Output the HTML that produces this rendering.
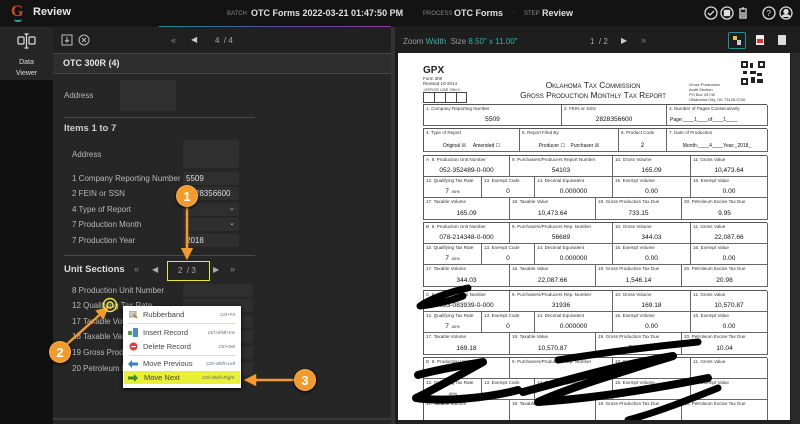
<!DOCTYPE html>
<html><head><meta charset="utf-8"><style>
*{margin:0;padding:0;box-sizing:border-box}
body{width:800px;height:424px;overflow:hidden;background:#1b1b1b;font-family:"Liberation Sans",sans-serif;position:relative}
.a{position:absolute}
.t{position:absolute;white-space:nowrap}
.lbl{color:#b8b8b8;font-size:8px}
.inp{position:absolute;background:#2f2f2f;border-radius:2px}
.c{position:absolute;border-right:1px solid #666;border-bottom:1px solid #666}
.c .l{position:absolute;left:2px;top:1px;font-size:4.6px;color:#333;white-space:nowrap}
.c .v{position:absolute;left:0;right:0;bottom:2px;text-align:center;font-size:6.6px;color:#111}
.blk{position:absolute;left:423px;width:344px;height:65px;border:1px solid #555;border-right:none;border-bottom:none}
.mi{position:absolute;left:0;width:118px;height:13px;font-size:7.5px;color:#444}
.mi span{position:absolute;left:20px;top:2px}
.mi i{position:absolute;right:6px;top:4px;font-size:4.5px;color:#567;font-style:italic}
.num{position:absolute;width:22px;height:22px;border-radius:50%;background:#f39a2b;border:1.5px solid #fff3;color:#fff;font-weight:bold;font-size:13px;text-align:center;line-height:21px;box-shadow:0 1px 3px #000}
</style></head><body>
<!-- top bar -->
<div class="a" style="left:0;top:0;width:800px;height:26px;background:#131313"></div>
<div class="t" style="left:11px;top:3px;font-family:'Liberation Serif',serif;font-size:16px;color:#d2462a;font-weight:bold">G</div>
<div class="a" style="left:14px;top:19px;width:8px;height:3px;border-bottom:2px solid #2aa39a;border-radius:0 0 4px 4px"></div>
<div class="t" style="left:33px;top:6px;font-size:11px;font-weight:bold;color:#e8e8e8">Review</div>
<div class="t" style="left:227px;top:11px;font-size:6px;color:#888">BATCH</div>
<div class="t" style="left:251px;top:8px;font-size:9px;font-weight:bold;color:#e0e0e0">OTC Forms 2022-03-21 01:47:50 PM</div>
<div class="t" style="left:412px;top:9px;font-size:7px;color:#777">·</div>
<div class="t" style="left:423px;top:11px;font-size:6px;color:#888">PROCESS</div>
<div class="t" style="left:454px;top:8px;font-size:9px;font-weight:bold;color:#e0e0e0">OTC Forms</div>
<div class="t" style="left:512px;top:9px;font-size:7px;color:#777">·</div>
<div class="t" style="left:524px;top:11px;font-size:6px;color:#888">STEP</div>
<div class="t" style="left:542px;top:8px;font-size:9px;font-weight:bold;color:#e0e0e0">Review</div>
<svg class="a" style="left:703px;top:5px" width="95" height="16" fill="none" stroke="#ddd" stroke-width="1.3">
<circle cx="8" cy="8" r="6"/><path d="M5 8l2 2 4-4"/>
<circle cx="24" cy="8" r="6"/><rect x="21.5" y="5.5" width="5" height="5" fill="#ddd"/>
<path d="M36 4h8M39 3h2M37 5v8h6V5M39 7v5M41 7v5"/>
<circle cx="66" cy="8" r="6"/><text x="63.5" y="11" font-size="8" fill="#ddd" stroke="none" font-family="Liberation Sans">?</text>
<circle cx="83" cy="8" r="6"/><circle cx="83" cy="6.5" r="2" fill="#ddd"/><path d="M79 12c1-3 7-3 8 0" fill="#ddd"/>
</svg>
<div class="a" style="left:159px;top:26px;width:232px;height:1px;background:linear-gradient(90deg,#1b8f8a,#5a4aa0,#8a3aa0)"></div>
<!-- sidebar -->
<div class="a" style="left:0;top:27px;width:53px;height:397px;background:#101010"></div>
<div class="a" style="left:0;top:27px;width:53px;height:53px;background:#262626"></div>
<svg class="a" style="left:17px;top:33px" width="20" height="16" fill="none" stroke="#ddd" stroke-width="1.2"><rect x="1" y="4" width="6" height="7" rx="1"/><rect x="12" y="4" width="6" height="7" rx="1"/><path d="M9.5 1v14M7.5 1h4M7.5 15h4"/></svg>
<div class="t" style="left:0;width:53px;text-align:center;top:57px;font-size:7px;color:#ddd;line-height:11px">Data<br>Viewer</div>
<!-- left panel -->
<div class="a" style="left:53px;top:27px;width:338px;height:397px;background:#262626"></div>
<div class="a" style="left:53px;top:27px;width:338px;height:26px;background:#202020"></div>
<svg class="a" style="left:61px;top:34px" width="30" height="12" fill="none" stroke="#bbb" stroke-width="1"><rect x="1" y="1" width="10" height="10"/><path d="M6 3v5M4 6l2 2 2-2"/><circle cx="23" cy="6" r="5"/><path d="M21 4l4 4M25 4l-4 4"/></svg>
<div class="t" style="left:171px;top:35px;font-size:9px;color:#888">«</div>
<div class="t" style="left:191px;top:35px;font-size:8px;color:#ccc">◀</div>
<div class="t" style="left:215px;top:36px;font-size:8px;color:#aaa">4 &nbsp;/ 4</div>
<div class="a" style="left:53px;top:53px;width:338px;height:21px;background:#2e2e2e;border-top:1px solid #444;border-bottom:1px solid #444"></div>
<div class="t" style="left:63px;top:58px;font-size:9px;font-weight:bold;color:#e6e6e6">OTC 300R (4)</div>
<div class="t lbl" style="left:64px;top:91px">Address</div>
<div class="inp" style="left:120px;top:80px;width:56px;height:31px"></div>
<div class="a" style="left:64px;top:117px;width:191px;height:1px;background:#4a4a4a"></div>
<div class="t" style="left:64px;top:123px;font-size:9.5px;font-weight:bold;color:#ccc">Items 1 to 7</div>
<div class="t lbl" style="left:72px;top:150px">Address</div>
<div class="inp" style="left:183px;top:140px;width:56px;height:28px"></div>
<div class="t lbl" style="left:72px;top:174px">1 Company Reporting Number</div>
<div class="inp" style="left:183px;top:172px;width:56px;height:13px"></div>
<div class="t" style="left:186px;top:174px;font-size:8px;color:#ddd">5509</div>
<div class="t lbl" style="left:72px;top:189px">2 FEIN or SSN</div>
<div class="inp" style="left:183px;top:187px;width:56px;height:13px"></div>
<div class="t" style="left:186px;top:189px;font-size:8px;color:#ddd">2828356600</div>
<div class="t lbl" style="left:72px;top:205px">4 Type of Report</div>
<div class="inp" style="left:183px;top:203px;width:56px;height:13px"></div>
<div class="t" style="left:229px;top:204px;font-size:7px;color:#ccc">⌄</div>
<div class="t lbl" style="left:72px;top:220px">7 Production Month</div>
<div class="inp" style="left:183px;top:218px;width:56px;height:13px"></div>
<div class="t" style="left:229px;top:219px;font-size:7px;color:#ccc">⌄</div>
<div class="t lbl" style="left:72px;top:236px">7 Production Year</div>
<div class="inp" style="left:183px;top:234px;width:56px;height:13px"></div>
<div class="t" style="left:186px;top:236px;font-size:8px;color:#ddd">2018</div>
<div class="a" style="left:64px;top:255px;width:191px;height:1px;background:#4a4a4a"></div>
<div class="t" style="left:64px;top:264px;font-size:9.5px;font-weight:bold;color:#ddd">Unit Sections</div>
<div class="t" style="left:134px;top:264px;font-size:9px;color:#888">«</div>
<div class="t" style="left:152px;top:265px;font-size:8px;color:#aaa">◀</div>
<div class="a" style="left:167px;top:261px;width:43px;height:20px;border:1.5px solid #e9e82a"></div>
<div class="t" style="left:178px;top:266px;font-size:8px;color:#aaa">2 &nbsp;/ 3</div>
<div class="t" style="left:213px;top:265px;font-size:8px;color:#aaa">▶</div>
<div class="t" style="left:230px;top:264px;font-size:9px;color:#888">»</div>
<div class="t lbl" style="left:72px;top:286px">8 Production Unit Number</div>
<div class="inp" style="left:183px;top:284px;width:70px;height:13px"></div>
<div class="t lbl" style="left:72px;top:301px">12 Qualifying Tax Rate</div>
<div class="inp" style="left:183px;top:299px;width:70px;height:13px"></div>
<div class="t lbl" style="left:72px;top:317px">17 Taxable Volume</div>
<div class="inp" style="left:183px;top:315px;width:70px;height:13px"></div>
<div class="t lbl" style="left:72px;top:332px">18 Taxable Value</div>
<div class="inp" style="left:183px;top:330px;width:70px;height:13px"></div>
<div class="t lbl" style="left:72px;top:348px">19 Gross Production Tax Due</div>
<div class="inp" style="left:183px;top:346px;width:70px;height:13px"></div>
<div class="t lbl" style="left:72px;top:364px">20 Petroleum Excise Tax Due</div>
<div class="inp" style="left:183px;top:362px;width:70px;height:13px"></div>
<div class="a" style="left:53px;top:418px;width:338px;height:2px;background:#3a3a3a"></div>
<div class="a" style="left:391px;top:27px;width:4px;height:397px;background:#333"></div>
<!-- context menu -->
<div class="a" style="left:123px;top:306px;width:118px;height:82px;background:#fff;box-shadow:0 1px 4px #000"></div>
<div class="a" style="left:123px;top:306px;width:118px;height:82px">
<div class="mi" style="top:2px"><svg class="a" style="left:6px;top:3px" width="9" height="8"><rect x="0" y="0" width="7" height="6" fill="#ccc" stroke="#999"/><path d="M4 3l4 4" stroke="#a80" stroke-width="1.5"/></svg><span>Rubberband</span><i>Ctrl+F4</i></div>
<div class="a" style="left:6px;top:17px;width:107px;height:1px;background:#ddd"></div>
<div class="mi" style="top:20px"><svg class="a" style="left:5px;top:2px" width="10" height="9"><rect x="0" y="3" width="4" height="4" fill="#4a4"/><rect x="5" y="0" width="5" height="9" fill="#58b"/></svg><span>Insert Record</span><i>Ctrl+Shift+Ins</i></div>
<div class="mi" style="top:34px"><svg class="a" style="left:6px;top:2px" width="9" height="9"><circle cx="4.5" cy="4.5" r="4" fill="#e33"/><rect x="2" y="4" width="5" height="1.2" fill="#fff"/></svg><span>Delete Record</span><i>Ctrl+Del</i></div>
<div class="a" style="left:6px;top:49px;width:107px;height:1px;background:#ddd"></div>
<div class="mi" style="top:51px"><svg class="a" style="left:5px;top:3px" width="10" height="8"><path d="M0 4l4-4v2.5h6v3H4V8z" fill="#3a7fd0"/></svg><span>Move Previous</span><i>Ctrl+Shift+Left</i></div>
<div class="mi" style="top:65px;left:1px;width:116px;background:#e9ef35"><svg class="a" style="left:4px;top:3px" width="10" height="8"><path d="M10 4L6 0v2.5H0v3h6V8z" fill="#3a8a2a"/></svg><span>Move Next</span><i>Ctrl+Shift+Right</i></div>
</div>
<!-- annotations -->
<svg class="a" style="left:0;top:0" width="400" height="424">
<defs><marker id="ah" markerWidth="5" markerHeight="5" refX="2.5" refY="2.5" orient="auto"><path d="M0 0L5 2.5L0 5z" fill="#f39a2b"/></marker></defs>
<path d="M187 205V254" stroke="#f39a2b" stroke-width="2.5" marker-end="url(#ah)"/>
<path d="M66 345L104 311" stroke="#f39a2b" stroke-width="2.5" marker-end="url(#ah)"/>
<path d="M296 380H250" stroke="#f39a2b" stroke-width="2.5" marker-end="url(#ah)"/>
<circle cx="110" cy="305" r="6.5" fill="none" stroke="#ece82a" stroke-width="1.5"/>
<circle cx="110" cy="305" r="3" fill="none" stroke="#ece82a" stroke-width="1.5"/>
</svg>
<div class="num" style="left:176px;top:185px">1</div>
<div class="num" style="left:49px;top:341px">2</div>
<div class="num" style="left:294px;top:369px">3</div>
<!-- viewer -->
<div class="a" style="left:395px;top:27px;width:405px;height:26px;background:#1e1e1e"></div>
<div class="t" style="left:403px;top:37px;font-size:8px;color:#999">Zoom <span style="color:#2bb5b0">Width</span> &nbsp;Size <span style="color:#2bb5b0">8.50" x 11.00"</span></div>
<div class="t" style="left:590px;top:37px;font-size:8px;color:#aaa">1 &nbsp;/ 2</div>
<div class="t" style="left:621px;top:36px;font-size:8px;color:#ccc">▶</div>
<div class="t" style="left:641px;top:35px;font-size:9px;color:#888">»</div>
<div class="a" style="left:728px;top:32px;width:18px;height:17px;border:1px solid #2a8f90;border-radius:2px"></div>
<div class="a" style="left:733px;top:36px;width:4px;height:4px;background:#e6c23a"></div><div class="a" style="left:737px;top:40px;width:4px;height:5px;background:#ccc"></div>
<div class="a" style="left:756px;top:35px;width:8px;height:10px;background:#eee"></div><div class="a" style="left:757px;top:39px;width:6px;height:4px;background:#d33"></div>
<div class="a" style="left:778px;top:35px;width:8px;height:10px;background:#ddd"></div>
<div class="a" style="left:791px;top:53px;width:9px;height:371px;background:#2a2a2a"></div>
<!-- page -->
<div class="a" style="left:398px;top:53px;width:392px;height:371px;background:#fff;overflow:hidden">
<div class="t" style="left:25px;top:12px;font-size:10px;font-weight:bold;color:#222">GPX</div>
<div class="t" style="left:25px;top:23px;font-size:4.5px;color:#333;line-height:5px">Form 300<br>Revised 10-2014</div>
<div class="t" style="left:25px;top:34px;font-size:4px;color:#333">-OFFICE USE ONLY-</div>
<div class="a" style="left:25px;top:39px;width:44px;height:11px;border:1px solid #444;background:linear-gradient(90deg,transparent 10px,#444 10px,#444 11px,transparent 11px,transparent 21px,#444 21px,#444 22px,transparent 22px,transparent 32px,#444 32px,#444 33px,transparent 33px)"></div>
<div class="t" style="left:110px;top:27px;width:170px;text-align:center;font-size:8.5px;color:#222;line-height:10px;font-variant:small-caps">Oklahoma Tax Commission<br>Gross Production Monthly Tax Report</div>
<div class="t" style="left:291px;top:29px;font-size:4px;color:#333;line-height:5px">Gross Production<br>Audit Section<br>PO Box 26740<br>Oklahoma City, OK 73126-0740</div>
<svg class="a" style="left:343px;top:8px" width="24" height="24"><rect width="24" height="24" fill="#fff"/><g fill="#222"><rect x="0" y="0" width="7" height="7"/><rect x="17" y="0" width="7" height="7"/><rect x="0" y="17" width="7" height="7"/><rect x="9" y="2" width="3" height="5"/><rect x="9" y="10" width="6" height="3"/><rect x="16" y="12" width="5" height="3"/><rect x="10" y="16" width="4" height="6"/><rect x="16" y="18" width="6" height="4"/><rect x="2" y="10" width="4" height="3"/></g><g fill="#fff"><rect x="2" y="2" width="3" height="3"/><rect x="19" y="2" width="3" height="3"/><rect x="2" y="19" width="3" height="3"/></g></svg>
</div>
<!-- form rows -->
<div class="a" style="left:423px;top:104px;width:344px;height:22px;border:1px solid #555;border-right:none;border-bottom:none">
<div class="c" style="left:0;top:0;width:138px;height:21px"><div class="l">1. Company Reporting Number</div><div class="v">5509</div></div>
<div class="c" style="left:138px;top:0;width:105px;height:21px"><div class="l">2. FEIN or SSN</div><div class="v">2828356600</div></div>
<div class="c" style="left:243px;top:0;width:101px;height:21px"><div class="l">3. Number of Pages Consecutively</div><div class="v" style="text-align:left;left:3px;font-size:5px">Page:____1____of____1____</div></div>
</div>
<div class="a" style="left:423px;top:128px;width:344px;height:24px;border:1px solid #555;border-right:none;border-bottom:none">
<div class="c" style="left:0;top:0;width:96px;height:23px"><div class="l">4. Type of Report</div><div class="v" style="font-size:5px">Original ☒ &nbsp;&nbsp;&nbsp;&nbsp;Amended ☐</div></div>
<div class="c" style="left:96px;top:0;width:99px;height:23px"><div class="l">5. Report Filed By</div><div class="v" style="font-size:5px">Producer ☐ &nbsp;&nbsp;&nbsp;Purchaser ☒</div></div>
<div class="c" style="left:195px;top:0;width:48px;height:23px"><div class="l">6. Product Code</div><div class="v">2</div></div>
<div class="c" style="left:243px;top:0;width:101px;height:23px"><div class="l">7. Date of Production</div><div class="v" style="font-size:5px">Month:____4____Year:_2018_</div></div>
</div>

<div class="blk" style="top:155px">
<div class="c" style="left:0;top:0;width:86px;height:21px"><div class="l">A&nbsp; 8. Production Unit Number</div><div class="v">052-352489-0-000</div></div>
<div class="c" style="left:86px;top:0;width:103px;height:21px"><div class="l">9. Purchasers/Producers Report Number</div><div class="v">54103</div></div>
<div class="c" style="left:189px;top:0;width:78px;height:21px"><div class="l">10. Gross Volume</div><div class="v">165.09</div></div>
<div class="c" style="left:267px;top:0;width:77px;height:21px"><div class="l">11. Gross Value</div><div class="v">10,473.64</div></div>
<div class="c" style="left:0;top:21px;width:58px;height:21px"><div class="l">12. Qualifying Tax Rate</div><div class="v">7 <span style="font-size:4px">.00%</span></div></div>
<div class="c" style="left:58px;top:21px;width:53px;height:21px"><div class="l">13. Exempt Code</div><div class="v">0</div></div>
<div class="c" style="left:111px;top:21px;width:78px;height:21px"><div class="l">14. Decimal Equivalent</div><div class="v">0.000000</div></div>
<div class="c" style="left:189px;top:21px;width:78px;height:21px"><div class="l">15. Exempt Volume</div><div class="v">0.00</div></div>
<div class="c" style="left:267px;top:21px;width:77px;height:21px"><div class="l">16. Exempt Value</div><div class="v">0.00</div></div>
<div class="c" style="left:0;top:42px;width:86px;height:22px"><div class="l">17. Taxable Volume</div><div class="v">165.09</div></div>
<div class="c" style="left:86px;top:42px;width:86px;height:22px"><div class="l">18. Taxable Value</div><div class="v">10,473.64</div></div>
<div class="c" style="left:172px;top:42px;width:86px;height:22px"><div class="l">19. Gross Production Tax Due</div><div class="v">733.15</div></div>
<div class="c" style="left:258px;top:42px;width:86px;height:22px"><div class="l">20. Petroleum Excise Tax Due</div><div class="v">9.95</div></div>
</div>

<div class="blk" style="top:222px">
<div class="c" style="left:0;top:0;width:86px;height:21px"><div class="l">B&nbsp; 8. Production Unit Number</div><div class="v">078-214348-0-000</div></div>
<div class="c" style="left:86px;top:0;width:103px;height:21px"><div class="l">9. Purchasers/Producers Rep. Number</div><div class="v">56689</div></div>
<div class="c" style="left:189px;top:0;width:78px;height:21px"><div class="l">10. Gross Volume</div><div class="v">344.03</div></div>
<div class="c" style="left:267px;top:0;width:77px;height:21px"><div class="l">11. Gross Value</div><div class="v">22,087.66</div></div>
<div class="c" style="left:0;top:21px;width:58px;height:21px"><div class="l">12. Qualifying Tax Rate</div><div class="v">7 <span style="font-size:4px">.00%</span></div></div>
<div class="c" style="left:58px;top:21px;width:53px;height:21px"><div class="l">13. Exempt Code</div><div class="v">0</div></div>
<div class="c" style="left:111px;top:21px;width:78px;height:21px"><div class="l">14. Decimal Equivalent</div><div class="v">0.000000</div></div>
<div class="c" style="left:189px;top:21px;width:78px;height:21px"><div class="l">15. Exempt Volume</div><div class="v">0.00</div></div>
<div class="c" style="left:267px;top:21px;width:77px;height:21px"><div class="l">16. Exempt Value</div><div class="v">0.00</div></div>
<div class="c" style="left:0;top:42px;width:86px;height:22px"><div class="l">17. Taxable Volume</div><div class="v">344.03</div></div>
<div class="c" style="left:86px;top:42px;width:86px;height:22px"><div class="l">18. Taxable Value</div><div class="v">22,087.66</div></div>
<div class="c" style="left:172px;top:42px;width:86px;height:22px"><div class="l">19. Gross Production Tax Due</div><div class="v">1,546.14</div></div>
<div class="c" style="left:258px;top:42px;width:86px;height:22px"><div class="l">20. Petroleum Excise Tax Due</div><div class="v">20.98</div></div>
</div>

<div class="blk" style="top:290px">
<div class="c" style="left:0;top:0;width:86px;height:21px"><div class="l">C&nbsp; 8. Production Unit Number</div><div class="v">033-083939-0-000</div></div>
<div class="c" style="left:86px;top:0;width:103px;height:21px"><div class="l">9. Purchasers/Producers Rep. Number</div><div class="v">31936</div></div>
<div class="c" style="left:189px;top:0;width:78px;height:21px"><div class="l">10. Gross Volume</div><div class="v">169.18</div></div>
<div class="c" style="left:267px;top:0;width:77px;height:21px"><div class="l">11. Gross Value</div><div class="v">10,570.87</div></div>
<div class="c" style="left:0;top:21px;width:58px;height:21px"><div class="l">12. Qualifying Tax Rate</div><div class="v">7 <span style="font-size:4px">.00%</span></div></div>
<div class="c" style="left:58px;top:21px;width:53px;height:21px"><div class="l">13. Exempt Code</div><div class="v">0</div></div>
<div class="c" style="left:111px;top:21px;width:78px;height:21px"><div class="l">14. Decimal Equivalent</div><div class="v">0.000000</div></div>
<div class="c" style="left:189px;top:21px;width:78px;height:21px"><div class="l">15. Exempt Volume</div><div class="v">0.00</div></div>
<div class="c" style="left:267px;top:21px;width:77px;height:21px"><div class="l">16. Exempt Value</div><div class="v">0.00</div></div>
<div class="c" style="left:0;top:42px;width:86px;height:22px"><div class="l">17. Taxable Volume</div><div class="v">169.18</div></div>
<div class="c" style="left:86px;top:42px;width:86px;height:22px"><div class="l">18. Taxable Value</div><div class="v">10,570.87</div></div>
<div class="c" style="left:172px;top:42px;width:86px;height:22px"><div class="l">19. Gross Production Tax Due</div><div class="v">739.96</div></div>
<div class="c" style="left:258px;top:42px;width:86px;height:22px"><div class="l">20. Petroleum Excise Tax Due</div><div class="v">10.04</div></div>
</div>

<div class="blk" style="top:357px">
<div class="c" style="left:0;top:0;width:86px;height:21px"><div class="l">D&nbsp; 8. Production Unit Number</div></div>
<div class="c" style="left:86px;top:0;width:103px;height:21px"><div class="l">9. Purchasers/Producers Rep. Number</div></div>
<div class="c" style="left:189px;top:0;width:78px;height:21px"><div class="l">10. Gross Volume</div></div>
<div class="c" style="left:267px;top:0;width:77px;height:21px"><div class="l">11. Gross Value</div></div>
<div class="c" style="left:0;top:21px;width:58px;height:21px"><div class="l">12. Qualifying Tax Rate</div><div class="v"><span style="font-size:4px">.00%</span></div></div>
<div class="c" style="left:58px;top:21px;width:53px;height:21px"><div class="l">13. Exempt Code</div></div>
<div class="c" style="left:111px;top:21px;width:78px;height:21px"><div class="l">14. Decimal Equivalent</div></div>
<div class="c" style="left:189px;top:21px;width:78px;height:21px"><div class="l">15. Exempt Volume</div></div>
<div class="c" style="left:267px;top:21px;width:77px;height:21px"><div class="l">16. Exempt Value</div></div>
<div class="c" style="left:0;top:42px;width:86px;height:22px"><div class="l">17. Taxable Volume</div></div>
<div class="c" style="left:86px;top:42px;width:86px;height:22px"><div class="l">18. Taxable Value</div></div>
<div class="c" style="left:172px;top:42px;width:86px;height:22px"><div class="l">19. Gross Production Tax Due</div></div>
<div class="c" style="left:258px;top:42px;width:86px;height:22px"><div class="l">20. Petroleum Excise Tax Due</div></div>
</div>
<!-- scribbles -->
<svg class="a" style="left:398px;top:280px" width="392" height="144" fill="none" stroke="#000" stroke-linecap="round" stroke-linejoin="round">
<path d="M70 8C50 12 30 20 22 26C35 25 55 20 65 16" stroke-width="7"/>
<path d="M20 95C45 88 75 84 85 82C60 96 35 110 18 118C45 122 90 118 120 110" stroke-width="8"/>
<path d="M125 112C170 100 220 85 275 76C230 90 170 108 140 122C200 118 260 108 310 98" stroke-width="8"/>
<path d="M160 80C210 72 260 66 300 62" stroke-width="7"/>
<path d="M230 140C260 132 290 120 320 108" stroke-width="7"/>
</svg>
<div class="a" style="left:398px;top:420px;width:392px;height:4px;background:#222"></div>
</body></html>
